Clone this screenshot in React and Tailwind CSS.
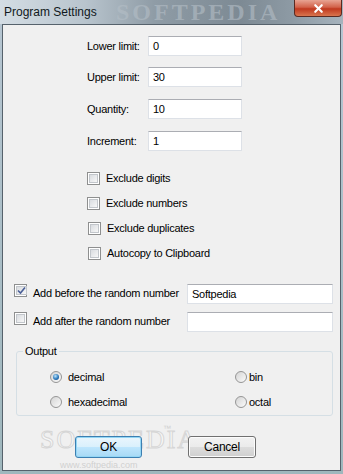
import { X } from "lucide-react";

const field =
  "h-[20px] bg-white border border-[#dde1e7] border-t-[#abadb3] px-[4px] flex items-center text-[11px]";

function CheckBox({ checked }) {
  return (
    <span className="w-[13px] h-[13px] shrink-0 border border-[#8e8f8f] bg-white p-[1px] flex">
      <span className="flex-1 border border-[#c2c6cb] bg-gradient-to-br from-[#d9dce0] to-[#f7f7f7] flex items-center justify-center">
        {checked && (
          <svg width="9" height="9" viewBox="0 0 9 9">
            <path d="M1 4.5 L3.5 7 L8 1.5" fill="none" stroke="#4a5f97" strokeWidth="1.6" />
          </svg>
        )}
      </span>
    </span>
  );
}

function Radio({ checked }) {
  return (
    <span className="w-[12px] h-[12px] shrink-0 rounded-full border border-[#959595] bg-gradient-to-br from-[#d4d4d4] to-[#fbfbfb] flex items-center justify-center">
      {checked && (
        <span className="w-[6px] h-[6px] rounded-full bg-[radial-gradient(circle_at_40%_35%,#bfe6fd,#2a78bb_55%,#14437d)]" />
      )}
    </span>
  );
}

function Button({ children, primary }) {
  return (
    <div
      className={
        "h-[22px] rounded-[3px] border flex items-center justify-center text-[12px] " +
        (primary
          ? "border-[#3c7fb1] shadow-[inset_0_0_0_1px_#93d6f5] bg-[linear-gradient(#eaf6fd_0%,#d9f0fc_50%,#bee6fd_50%,#a7d9f5_100%)]"
          : "border-[#707070] shadow-[inset_0_0_0_1px_#fcfcfc] bg-[linear-gradient(#f2f2f2_0%,#ebebeb_50%,#dddddd_50%,#cfcfcf_100%)]")
      }
    >
      {children}
    </div>
  );
}

export default function App() {
  const limits = [
    ["Lower limit:", "0", "mt-0"],
    ["Upper limit:", "30", "mt-[11px]"],
    ["Quantity:", "10", "mt-[12px]"],
    ["Increment:", "1", "mt-[12px]"],
  ];
  const opts = [
    ["Exclude digits", "mt-0 ml-0"],
    ["Exclude numbers", "mt-[12px] ml-0"],
    ["Exclude duplicates", "mt-[12px] ml-[1px]"],
    ["Autocopy to Clipboard", "mt-[12px] ml-[1px]"],
  ];

  return (
    <div className="w-[343px] h-[474px] flex flex-col overflow-hidden bg-gradient-to-b from-[#b7c6d2] to-[#9fb7bd] font-['Liberation_Sans',Arial,sans-serif] text-black tracking-[-0.25px]">
      {/* title bar */}
      <div className="relative h-[24px] shrink-0 flex items-start bg-[linear-gradient(90deg,#d4dde4_0%,#b8c4cd_25%,#8f9ca6_45%,#7d8a94_70%,#8d9aa4_85%,#a6b3bd_100%)]">
        <span className="absolute left-[116px] top-0 text-[24px] leading-[24px] font-bold font-['Liberation_Serif',serif] tracking-[3px] text-[#b4bec6]/60">
          SOFTPEDIA
        </span>
        <span className="relative ml-[4px] mt-[3px] text-[12px] tracking-normal text-[#101820]">
          Program Settings
        </span>
        <div className="relative ml-auto mr-[1px] w-[48px] h-[17px] rounded-b-[4px] border border-t-0 border-[#5a2a22] bg-[linear-gradient(#e8a493_0%,#d2624a_45%,#c0391f_55%,#d9754e_100%)] flex items-center justify-center">
          <X size={13} strokeWidth={4} className="text-white" />
        </div>
      </div>

      {/* client area */}
      <div className="relative flex-1 ml-[2px] mr-[2px] mb-[3px] border border-[#56626c] bg-[#f0f0f0] flex flex-col text-[11px] leading-[13px]">
        <span className="absolute left-[37px] top-[402px] text-[26px] leading-[26px] font-['Liberation_Serif',serif] tracking-[2px] text-[#f7f7f7] [-webkit-text-stroke:1px_#d6d6d6]">
          SOFTPEDIA
        </span>
        <span className="absolute left-[160px] top-[400px] text-[8px] leading-[8px] tracking-normal text-[#cfcfcf]">
          ™
        </span>
        <span className="absolute left-[57px] top-[435px] text-[9px] leading-[10px] tracking-normal text-[#d0d0d0]">
          www.softpedia.com
        </span>

        <div className="flex flex-col pl-[84px] pt-[11px]">
          {limits.map(([label, value, m]) => (
            <div key={label} className={"flex items-center h-[20px] " + m}>
              <span className="w-[61px]">{label}</span>
              <div className={field + " w-[94px]"}>{value}</div>
            </div>
          ))}
        </div>

        <div className="flex flex-col pl-[84px] mt-[21px]">
          {opts.map(([label, m]) => (
            <div key={label} className={"flex items-center gap-[6px] h-[13px] " + m}>
              <CheckBox />
              <span>{label}</span>
            </div>
          ))}
        </div>

        <div className="flex items-start pl-[11px] mt-[24px] h-[20px]">
          <CheckBox checked />
          <span className="ml-[6px] mt-[3px] w-[154px]">Add before the random number</span>
          <div className={field + " w-[146px]"}>Softpedia</div>
        </div>
        <div className="flex items-start pl-[11px] mt-[8px] h-[20px]">
          <CheckBox />
          <span className="ml-[6px] mt-[3px] w-[154px]">Add after the random number</span>
          <div className={field + " w-[146px]"} />
        </div>

        <fieldset className="mt-[13px] ml-[13px] w-[317px] h-[71px] border border-[#d5dfe5] rounded-[3px]">
          <legend className="ml-[6px] px-[2px]">Output</legend>
          <div className="grid grid-cols-[185px_1fr] gap-y-[13px] mt-[13px] pl-[33px]">
            <div className="flex items-center gap-[6px] h-[12px]">
              <Radio checked />
              <span>decimal</span>
            </div>
            <div className="flex items-center gap-[2px] h-[12px]">
              <Radio />
              <span>bin</span>
            </div>
            <div className="flex items-center gap-[6px] h-[12px]">
              <Radio />
              <span>hexadecimal</span>
            </div>
            <div className="flex items-center gap-[2px] h-[12px]">
              <Radio />
              <span>octal</span>
            </div>
          </div>
        </fieldset>

        <div className="relative flex mt-[20px] pl-[72px] gap-[46px]">
          <div className="w-[67px]">
            <Button primary>OK</Button>
          </div>
          <div className="w-[68px]">
            <Button>Cancel</Button>
          </div>
        </div>
      </div>
    </div>
  );
}
